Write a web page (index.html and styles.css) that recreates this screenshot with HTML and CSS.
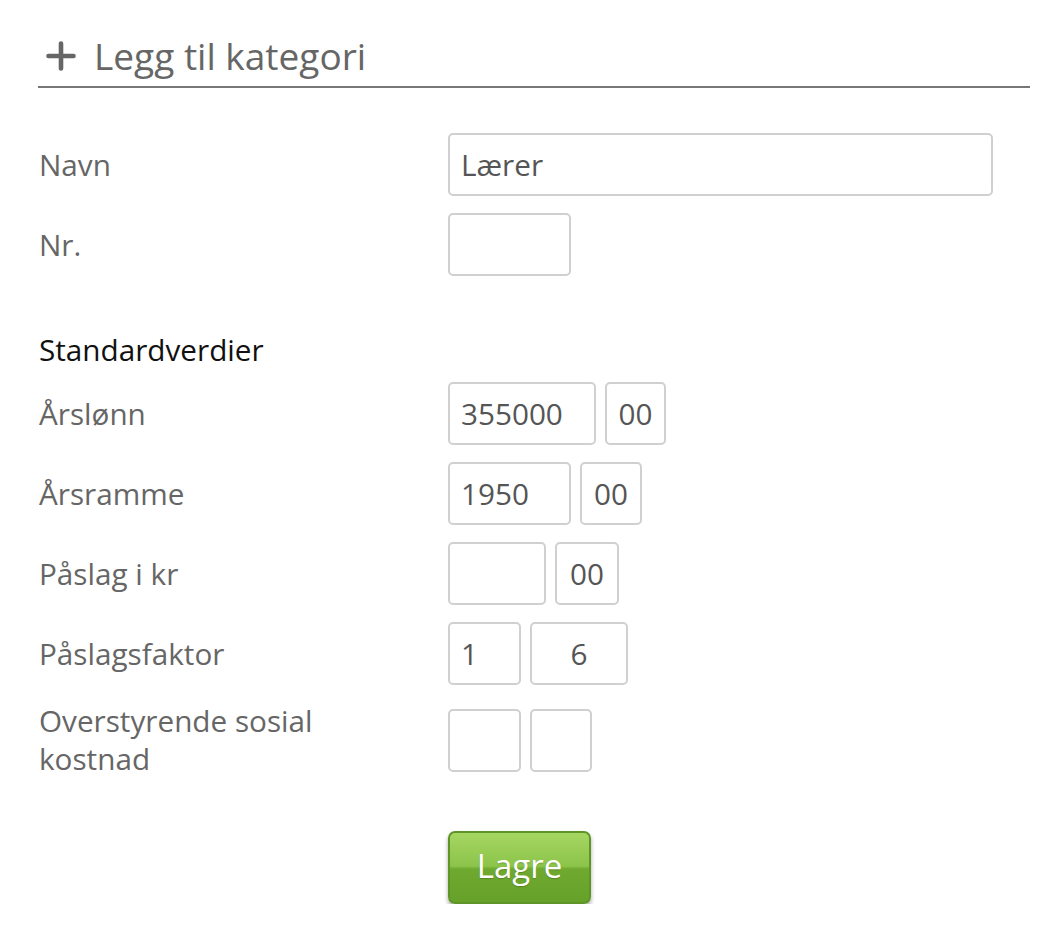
FILE: index.html
```html
<!DOCTYPE html>
<html lang="no">
<head>
<meta charset="utf-8">
<title>Legg til kategori</title>
<link rel="stylesheet" href="styles.css">
</head>
<body>
<div class="page">
  <h1 class="title">
    <svg class="plus" width="30" height="30" viewBox="0 0 30 30" aria-hidden="true">
      <path d="M15 2.5V27.5M2.5 15H27.5" stroke="#666" stroke-width="4.6" stroke-linecap="round" fill="none"/>
    </svg>
    <span>Legg til kategori</span>
  </h1>

  <form class="form">
    <div class="row">
      <label class="label">Navn</label>
      <div class="fields"><input class="input w-name" type="text" value="Lærer"></div>
    </div>
    <div class="row">
      <label class="label">Nr.</label>
      <div class="fields"><input class="input w-123" type="text" value=""></div>
    </div>

    <h2 class="section">Standardverdier</h2>

    <div class="row">
      <label class="label">Årslønn</label>
      <div class="fields">
        <input class="input w-148" type="text" value="355000">
        <input class="input dec w-60" type="text" value="00">
      </div>
    </div>
    <div class="row">
      <label class="label">Årsramme</label>
      <div class="fields">
        <input class="input w-123" type="text" value="1950">
        <input class="input dec w-61" type="text" value="00">
      </div>
    </div>
    <div class="row">
      <label class="label">Påslag i kr</label>
      <div class="fields">
        <input class="input w-98" type="text" value="">
        <input class="input dec w-63" type="text" value="00">
      </div>
    </div>
    <div class="row">
      <label class="label">Påslagsfaktor</label>
      <div class="fields">
        <input class="input w-73" type="text" value="1">
        <input class="input dec w-98" type="text" value="6">
      </div>
    </div>
    <div class="row">
      <label class="label">Overstyrende sosial<br>kostnad</label>
      <div class="fields">
        <input class="input w-73" type="text" value="">
        <input class="input dec w-61" type="text" value="">
      </div>
    </div>

    <div class="actions">
      <button class="btn" type="button">Lagre</button>
    </div>
  </form>
</div>
</body>
</html>
```

FILE: styles.css
```css
* { box-sizing: border-box; }

html, body {
  margin: 0;
  padding: 0;
  background: #fff;
}

body {
  font-family: "Open Sans", "Liberation Sans", sans-serif;
  color: #666;
}

.page {
  padding: 25px 32px 0 38px;
}

.title {
  display: flex;
  align-items: center;
  gap: 18px;
  margin: 0;
  padding: 6px 0 5px 8px;
  font-size: 37px;
  font-weight: 400;
  color: #666;
  border-bottom: 2px solid #777;
  line-height: 50px;
}

.plus { flex: none; display: block; }

.form {
  padding-top: 45px;
}

.row {
  display: flex;
  align-items: center;
  margin-bottom: 17px;
  min-height: 63px;
}

.label {
  width: 410px;
  flex: none;
  font-size: 29.7px;
  line-height: 38px;
  color: #666;
  padding-left: 1px;
}

.fields {
  display: flex;
  gap: 9px;
}

.input {
  height: 63px;
  border: 2px solid #d0d0d0;
  border-radius: 5px;
  font-family: "Open Sans", "Liberation Sans", sans-serif;
  font-size: 29.7px;
  color: #555;
  padding: 0 11px;
  background: #fff;
  outline: none;
}

.input.dec { text-align: center; padding: 0 3px; }

.w-name { width: 545px; }
.w-148 { width: 148px; }
.w-123 { width: 123px; }
.w-98 { width: 98px; }
.w-73 { width: 73px; }
.w-60 { width: 61px; }
.w-61 { width: 62px; }
.w-63 { width: 64px; }

.section {
  margin: 0 0 13px 1px;
  padding-top: 38px;
  font-size: 29.7px;
  font-weight: 400;
  line-height: 38px;
  color: #111;
}

.actions {
  padding-left: 410px;
  padding-top: 36px;
}

.btn {
  width: 143px;
  height: 73px;
  border: 2px solid #5f9428;
  border-radius: 7px;
  background: linear-gradient(to bottom, #a6d662 0%, #8cc44a 48%, #6fa92f 52%, #66a12a 100%);
  box-shadow: 0 3px 4px rgba(0, 0, 0, 0.35);
  color: #fff;
  font-family: "Open Sans", "Liberation Sans", sans-serif;
  font-size: 33px;
  line-height: 1;
  padding: 0 0 4px;
  text-shadow: 0 1px 1px rgba(0, 0, 0, 0.2);
}
```
